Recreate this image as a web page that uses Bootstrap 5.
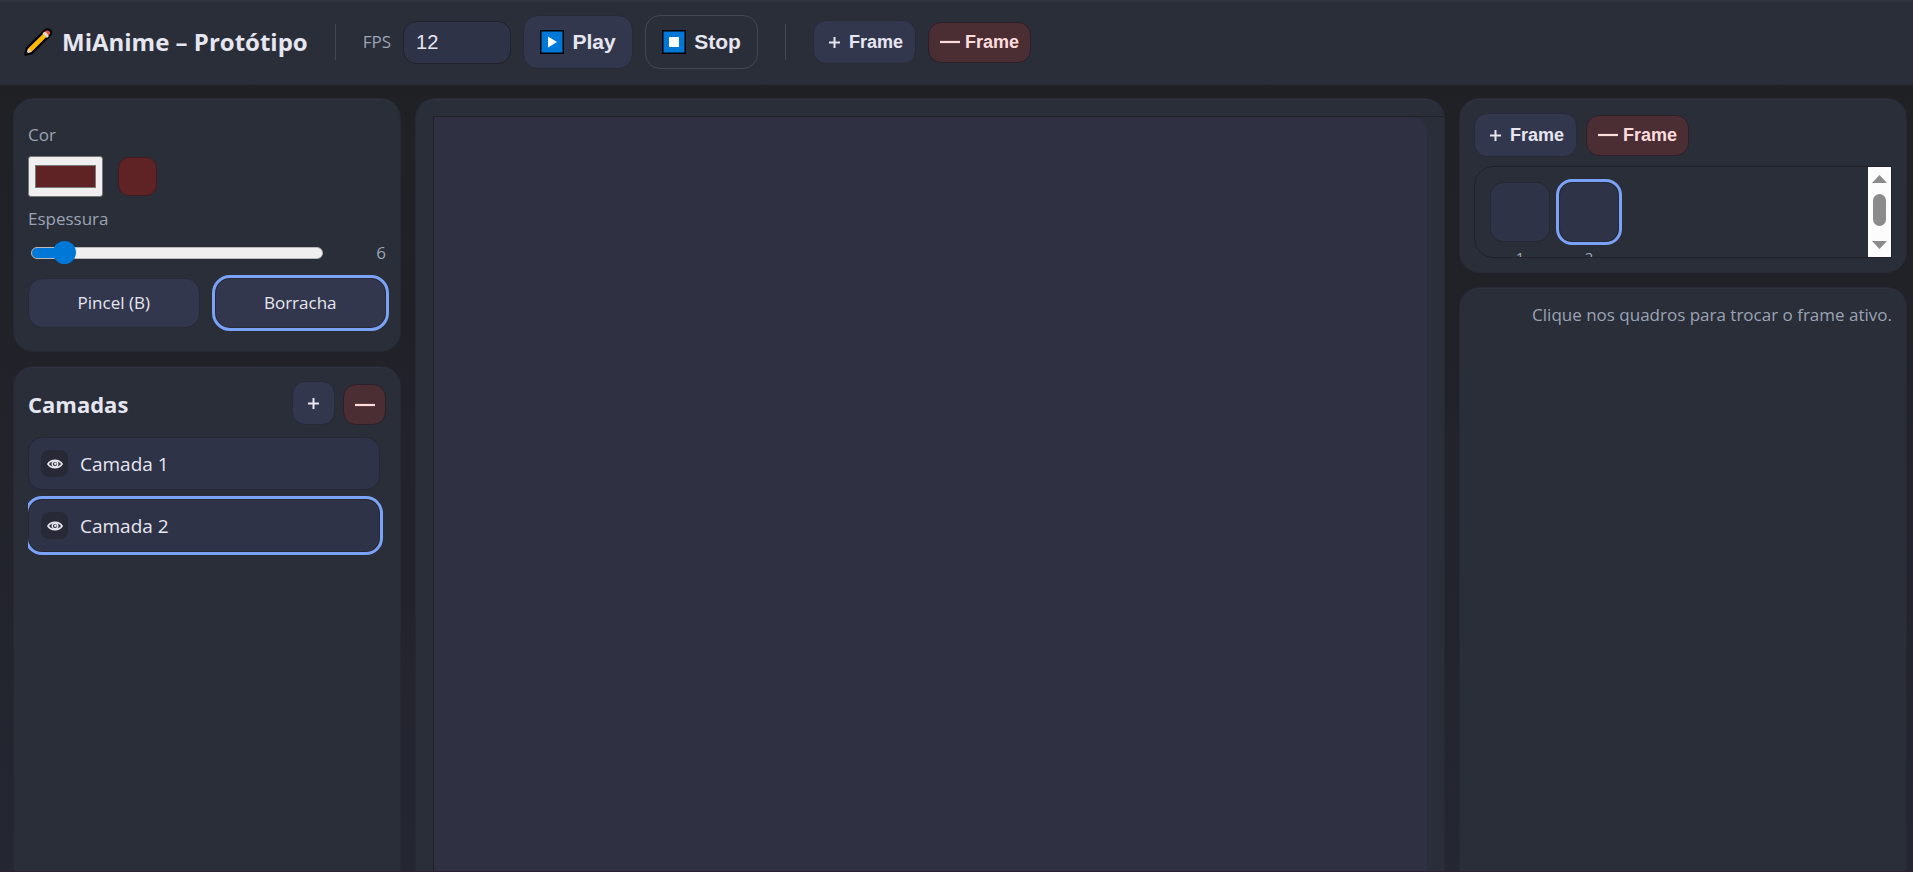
<!DOCTYPE html>
<html lang="pt-BR">
<head>
<meta charset="utf-8">
<meta name="viewport" content="width=device-width, initial-scale=1">
<title>MiAnime – Protótipo</title>
<link href="https://cdn.jsdelivr.net/npm/bootstrap@5.3.0/dist/css/bootstrap.min.css" rel="stylesheet">
<style>
:root{--ink:#e6e6f0;--dim:#9ba3b4;--panel:#2a2e39;--line:#20212b;--key:#33374e;--row:#2f3347;--accent:#7aa2f7;--danger:#4b2d34}
body{font-family:"Open Sans","Noto Sans",sans-serif;font-size:17px;line-height:26px;color:var(--ink);background:linear-gradient(#1f2023,#242632)}
.topbar{background:var(--panel);border-bottom:1px solid #2a2c36;box-shadow:inset 0 2px 0 #313341;height:85px;padding:0 24px;gap:12px}
.brand{gap:10px}
.app-title{font-size:24px;line-height:34px;font-weight:700;margin:0}
.side-title{font-size:22px}
.rule{width:1px;height:36px;background:#454753;margin:0 15px}
.dim{color:var(--dim)}
.fps-input{width:108px;height:43px;background:var(--row);border:1px solid var(--line);border-radius:13px;color:var(--ink);font:20px/24px "Liberation Sans",sans-serif;padding:0 12px}
.tool{display:inline-flex;align-items:center;justify-content:center;background:var(--key);border:1px solid #282a38;border-radius:13px;color:var(--ink);font:700 18px/24px "Liberation Sans",sans-serif;padding:0}
.tool-lg{height:54px;width:110px;font-size:21px;gap:8px;border-radius:15px}
.tool-line{background:transparent;border-color:#454753;width:113px}
.tool-sm{height:44px;width:103px;gap:9px;padding-left:3px}
.tool-danger{background:var(--danger);border-color:#2d1f28;color:#ffdcdc;height:41px;gap:5px;padding-left:0}
.tool-icon{width:43px;padding-left:0}
.frame-tools{gap:9px;margin-bottom:9px}
.workspace{display:grid;grid-template-columns:388px minmax(0,1fr) 448px;gap:14px;padding:13px 6px 0 13px;border-bottom:1px solid #2b2236}
.stack{gap:14px}
.panel{background:var(--panel);border:1px solid #262834;border-radius:20px;padding:14px;box-shadow:inset 0 1px 0 #303340}
.panel-open{border-bottom:0;border-radius:20px 20px 0 0}
.brush{padding:23px 14px}
.swatches,.modes{gap:15px}
.brush label{display:block;margin-bottom:8px}
.swatches{margin-bottom:9px}
.color-input{width:75px;height:41px;border:1px solid #767676;border-radius:3px;background:#efefef;padding:7px 5px}
.color-input::-webkit-color-swatch-wrapper{padding:1px}
.color-input::-webkit-color-swatch{border:1px solid #777;border-radius:0}
.sample{width:39px;height:39px;border-radius:11px;background:#602325;border:1px solid #421b1f}
.form-range.size{width:292px;height:24px;margin-left:3px}
.size::-webkit-slider-runnable-track{height:12px;border-radius:6px;border:1px solid #b9b9b9;background:linear-gradient(90deg,#0078d7 12%,#efefef 12%)}
.size::-webkit-slider-thumb{width:23px;height:23px;margin-top:-7px;background:#0078d7}
.mode{flex:1;height:50px;font:17px/24px "Open Sans","Noto Sans",sans-serif;border-radius:15px}
.picked{outline:3px solid var(--accent)}
.layers{gap:9px;overflow:hidden;padding:4px 6px 4px 0}
.layer-row{height:53px;background:var(--row);border:1px solid #262836;border-radius:14px;padding:0 12px;gap:12px;font-size:19px}
.eye{width:27px;height:27px;border:0;border-radius:8px;background:#272936;color:var(--ink);padding:0}
.stage{padding:17px 0 0 17px;overflow:hidden}
.stage-frame{border:solid #1f202a;border-width:1px 0 0 1px;height:100%;padding-right:17px}
.paper{display:block;width:100%;height:100%;background:#2f3042;border-top-right-radius:14px}
.strip{height:92px;border:1px solid var(--line);border-radius:20px 0 0 20px;overflow:hidden;padding-left:15px}
.frames{gap:9px;padding-top:15px}
.frame-item{width:60px;font-size:15px;line-height:20px}
.thumb{display:block;width:60px;height:60px;border:1px solid #262836;border-radius:13px;background:var(--row);margin-bottom:5px;padding:0}
.scroller{width:23px;background:#fcfcfc}
</style>
</head>
<body class="min-vh-100 d-flex flex-column">
<svg class="d-none">
  <symbol id="plus" viewBox="0 0 11 11"><path d="M5.5 0v11M0 5.500h11" stroke="currentColor" stroke-width="2"/></symbol>
  <symbol id="minus" viewBox="0 0 20 4"><path d="M0 2h20" stroke="currentColor" stroke-width="2.2"/></symbol>
  <symbol id="eye" viewBox="0 0 16 10"><path d="M1 5C4 .2 12 .2 15 5 12 9.800 4 9.800 1 5Z" fill="none" stroke="currentColor" stroke-width="1.700"/><circle cx="8" cy="5" r="2.800" fill="none" stroke="currentColor" stroke-width="1.400"/><circle cx="8.300" cy="4.700" r="1.300" fill="currentColor"/></symbol>
</svg>
<header class="topbar d-flex align-items-center">
  <div class="brand d-flex align-items-center">
    <svg width="28" height="28" viewBox="0 0 28 28" aria-hidden="true"><path d="M1.500 26.500 3 20 21 2.500Q23.500.5 26 2.500T25.500 7.500L8 25Z" fill="#ffb900" stroke="#000" stroke-width="2.400" stroke-linejoin="round"/><path d="m2.500 25.500 1.500-5q2.500.5 3.500 3.500Z" fill="#e8cfc4"/><path d="m2 26 .7-2.500 1.800 1.800Z" fill="#222"/><path d="m18.500 5.500 4.500 4.500 2-2L20.500 3.500Z" fill="#d7dadf"/><path d="m21 3 4 4.200q1.800-2.200.3-3.800T21 3Z" fill="#f04a58"/></svg>
    <h1 class="app-title">MiAnime – Protótipo</h1>
  </div>
  <span class="rule"></span>
  <label class="dim" for="fps">FPS</label>
  <input class="fps-input" id="fps" value="12" inputmode="numeric">
  <button class="tool tool-lg" type="button"><svg width="24" height="24" viewBox="0 0 24 24"><path d="M0 0h24v24H0z" fill="#000"/><path d="M1.500 1.500h21v21h-21z" fill="#0078d7"/><path d="m8 6.500 9 5.500-9 5.500z" fill="#fff"/></svg>Play</button>
  <button class="tool tool-lg tool-line" type="button"><svg width="24" height="24" viewBox="0 0 24 24"><path d="M0 0h24v24H0z" fill="#000"/><path d="M1.500 1.500h21v21h-21z" fill="#0078d7"/><path d="M7 7h10v10H7z" fill="#fff"/></svg>Stop</button>
  <span class="rule"></span>
  <button class="tool tool-sm" type="button"><svg width="11" height="11"><use href="#plus"/></svg>Frame</button>
  <button class="tool tool-sm tool-danger" type="button"><svg width="20" height="4"><use href="#minus"/></svg>Frame</button>
</header>
<main class="workspace flex-grow-1">
  <aside class="stack d-flex flex-column">
    <section class="panel brush">
      <label class="dim" for="cor">Cor</label>
      <div class="swatches d-flex align-items-center">
        <input class="color-input" type="color" id="cor" value="#602325">
        <span class="sample"></span>
      </div>
      <label class="dim" for="esp">Espessura</label>
      <div class="d-flex align-items-center justify-content-between mb-2 pb-1">
        <input class="form-range size" type="range" id="esp" min="1" max="64" value="6">
        <output class="dim" for="esp">6</output>
      </div>
      <div class="modes d-flex">
        <button class="tool mode" type="button">Pincel (B)</button>
        <button class="tool mode picked" type="button">Borracha</button>
      </div>
    </section>
    <section class="panel panel-open flex-grow-1">
      <div class="d-flex align-items-end gap-2 mb-2">
        <h2 class="app-title side-title me-auto pb-1">Camadas</h2>
        <button class="tool tool-sm tool-icon" type="button" aria-label="Adicionar camada"><svg width="11" height="11"><use href="#plus"/></svg></button>
        <button class="tool tool-sm tool-icon tool-danger" type="button" aria-label="Remover camada"><svg width="20" height="4"><use href="#minus"/></svg></button>
      </div>
      <div class="layers d-flex flex-column">
        <div class="layer-row d-flex align-items-center"><button class="eye d-flex align-items-center justify-content-center" type="button" aria-label="Visibilidade"><svg width="16" height="10"><use href="#eye"/></svg></button><span>Camada 1</span></div>
        <div class="layer-row picked d-flex align-items-center"><button class="eye d-flex align-items-center justify-content-center" type="button" aria-label="Visibilidade"><svg width="16" height="10"><use href="#eye"/></svg></button><span>Camada 2</span></div>
      </div>
    </section>
  </aside>
  <section class="panel panel-open stage">
    <div class="stage-frame"><canvas class="paper"></canvas></div>
  </section>
  <aside class="stack d-flex flex-column">
    <section class="panel">
      <div class="frame-tools d-flex align-items-center">
        <button class="tool tool-sm" type="button"><svg width="11" height="11"><use href="#plus"/></svg>Frame</button>
        <button class="tool tool-sm tool-danger" type="button"><svg width="20" height="4"><use href="#minus"/></svg>Frame</button>
      </div>
      <div class="strip d-flex justify-content-between">
        <div class="frames d-flex">
          <div class="frame-item text-center dim"><button class="thumb" type="button" aria-label="Quadro 1"></button>1</div>
          <div class="frame-item text-center dim"><button class="thumb picked" type="button" aria-label="Quadro 2"></button>2</div>
        </div>
        <div class="scroller"><svg width="23" height="90" viewBox="0 0 23 90" fill="#8b8b8b"><path d="m4 16 7.500-8 7.500 8zM4 74l7.500 8 7.500-8z"/><rect x="5" y="27" width="13" height="32" rx="6.500"/></svg></div>
      </div>
    </section>
    <section class="panel panel-open flex-grow-1">
      <p class="dim text-end m-0">Clique nos quadros para trocar o frame ativo.</p>
    </section>
  </aside>
</main>
<script src="https://cdn.jsdelivr.net/npm/bootstrap@5.3.0/dist/js/bootstrap.bundle.min.js"></script>
</body>
</html>
